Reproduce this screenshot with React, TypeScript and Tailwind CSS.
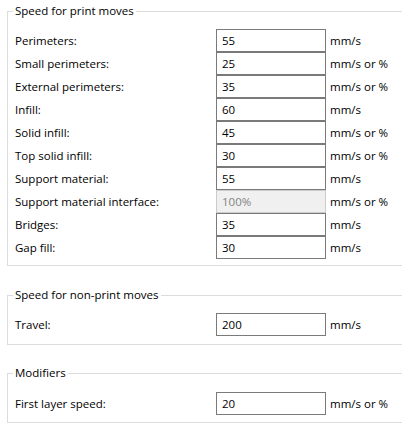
const font = { fontFamily: '"Open Sans", "Noto Sans", sans-serif' }

type Row = { label: string; value: string; unit: string; disabled?: boolean }

const printMoves: Row[] = [
  { label: 'Perimeters:', value: '55', unit: 'mm/s' },
  { label: 'Small perimeters:', value: '25', unit: 'mm/s or %' },
  { label: 'External perimeters:', value: '35', unit: 'mm/s or %' },
  { label: 'Infill:', value: '60', unit: 'mm/s' },
  { label: 'Solid infill:', value: '45', unit: 'mm/s or %' },
  { label: 'Top solid infill:', value: '30', unit: 'mm/s or %' },
  { label: 'Support material:', value: '55', unit: 'mm/s' },
  { label: 'Support material interface:', value: '100%', unit: 'mm/s or %', disabled: true },
  { label: 'Bridges:', value: '35', unit: 'mm/s' },
  { label: 'Gap fill:', value: '30', unit: 'mm/s' },
]

function SpeedRow({ row }: { row: Row }) {
  return (
    <div className="flex items-center h-[23px]">
      <span className="w-[201px] text-[11.5px] text-black">{row.label}</span>
      <input
        readOnly
        value={row.value}
        className={
          row.disabled
            ? 'w-[110px] h-[23px] border border-[#cccccc] bg-[#f0f0f0] px-[5px] text-[11.5px] text-[#838383] outline-none'
            : 'w-[110px] h-[23px] border border-[#7a7a7a] bg-white px-[5px] text-[11.5px] text-black outline-none'
        }
        style={font}
      />
      <span className="ml-[4px] text-[11.5px] text-black">{row.unit}</span>
    </div>
  )
}

function Group({ title, rows, className }: { title: string; rows: Row[]; className: string }) {
  return (
    <fieldset className={'ml-[7px] w-[420px] border border-[#dcdcdc] pl-[7px] ' + className}>
      <legend className="-ml-[2px] px-[2px] text-[11.5px] leading-[16px] text-black">{title}</legend>
      {rows.map(r => (
        <SpeedRow key={r.label} row={r} />
      ))}
    </fieldset>
  )
}

export default function App() {
  return (
    <div className="w-[402px] h-[429px] overflow-hidden bg-white" style={font}>
      <Group title="Speed for print moves" rows={printMoves} className="mt-[3px] pt-[10px] pb-[6px]" />
      <Group
        title="Speed for non-print moves"
        rows={[{ label: 'Travel:', value: '200', unit: 'mm/s' }]}
        className="mt-[21px] pt-[10px] pb-[8px]"
      />
      <Group
        title="Modifiers"
        rows={[{ label: 'First layer speed:', value: '20', unit: 'mm/s or %' }]}
        className="mt-[20px] pt-[11px] pb-[7px]"
      />
    </div>
  )
}
